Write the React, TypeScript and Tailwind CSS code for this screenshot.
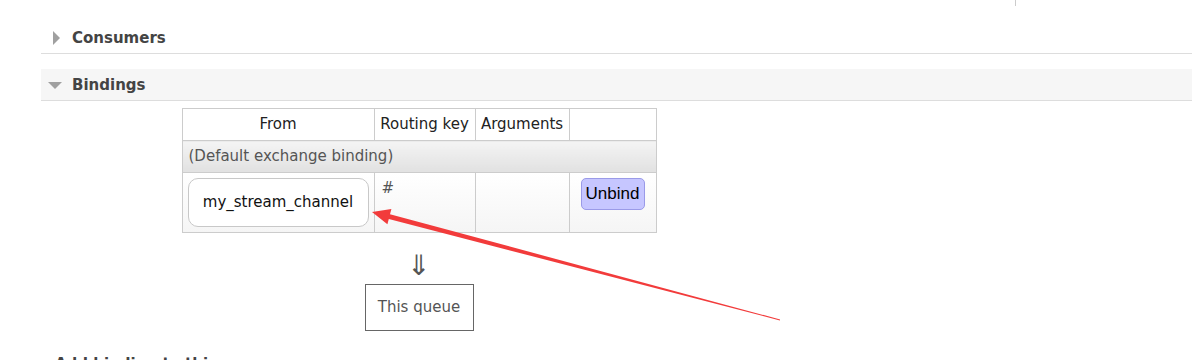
import React from "react";

const SectionHeader: React.FC<{ title: string; open?: boolean }> = ({ title, open }) => (
  <div
    className={`flex items-center h-[32px] border-b border-[#dddddd] ${
      open ? "bg-[#f6f6f6]" : ""
    }`}
  >
    <div className="w-[31px] flex justify-center">
      {open ? (
        <div className="w-0 h-0 border-l-[7px] border-r-[7px] border-t-[7px] border-l-transparent border-r-transparent border-t-[#a0a0a0] ml-[-3px] mt-[1px]" />
      ) : (
        <div className="w-0 h-0 border-t-[7px] border-b-[7px] border-l-[7px] border-t-transparent border-b-transparent border-l-[#a0a0a0] ml-[-1px]" />
      )}
    </div>
    <h2 className="text-[15px] font-bold text-[#444444] leading-none mt-[1px]">{title}</h2>
  </div>
);

const RedArrow = () => (
  <svg
    className="absolute inset-0 pointer-events-none"
    width={1192}
    height={360}
    viewBox="0 0 1192 360"
  >
    <polygon
      fill="#f23b3b"
      points="372,212 391.4,208.9 390,214.2 780.1,319.5 779.9,320.5 388.8,219 387.4,224.3"
    />
  </svg>
);

export default function App() {
  return (
    <div className="relative w-[1192px] h-[360px] overflow-hidden bg-white font-['DejaVu_Sans',sans-serif]">
      <div className="h-[6px] ml-[1015px] w-px bg-[#cccccc]" />
      <div className="pl-[41px] pt-[16px]">
        <SectionHeader title="Consumers" />
        <div className="mt-[15px]">
          <SectionHeader title="Bindings" open />
        </div>

        <div className="ml-[141px] mt-[7px] w-[474px] flex flex-col items-center">
          <table className="w-[474px] table-fixed border-collapse text-[15px] text-[#222222]">
            <colgroup>
              <col className="w-[192px]" />
              <col className="w-[101px]" />
              <col className="w-[94px]" />
              <col className="w-[87px]" />
            </colgroup>
            <thead>
              <tr>
                <th className="h-[32px] border border-[#cccccc] font-normal text-center whitespace-nowrap">From</th>
                <th className="border border-[#cccccc] font-normal text-center whitespace-nowrap">Routing key</th>
                <th className="border border-[#cccccc] font-normal text-center whitespace-nowrap">Arguments</th>
                <th className="border border-[#cccccc]" />
              </tr>
            </thead>
            <tbody>
              <tr>
                <td
                  colSpan={4}
                  className="h-[32px] border border-[#cccccc] px-[6px] text-[#555555] bg-gradient-to-b from-[#f4f4f4] to-[#e1e1e1]"
                >
                  (Default exchange binding)
                </td>
              </tr>
              <tr className="bg-gradient-to-b from-white to-[#f5f5f5]">
                <td className="h-[60px] border border-[#cccccc] p-[5px] align-top">
                  <div className="h-[49px] rounded-[10px] border border-[#c8c8c8] bg-white flex items-center justify-center text-[#111111] text-[15px]">
                    my_stream_channel
                  </div>
                </td>
                <td className="border border-[#cccccc] px-[7px] pt-[4px] align-top text-[#555555]">#</td>
                <td className="border border-[#cccccc]" />
                <td className="border border-[#cccccc] pt-[5px] align-top">
                  <div className="flex justify-center">
                    <button className="w-[64px] h-[32px] rounded-[5px] border border-[#9a9ae8] bg-[#c6c6ff] text-[17px] text-black font-['Liberation_Sans',sans-serif]">
                      Unbind
                    </button>
                  </div>
                </td>
              </tr>
            </tbody>
          </table>

          <div className="mt-[19px] text-[28px] leading-[28px] text-[#555555] font-['DejaVu_Sans',sans-serif]">⇓</div>
          <div className="mt-[4px] w-[109px] h-[47px] border border-[#666666] flex items-center justify-center text-[15px] text-[#555555]">
            This queue
          </div>
        </div>

        <h3 className="mt-[23px] ml-[14px] text-[15px] font-bold text-[#444444] leading-[20px]">
          Add binding to this queue
        </h3>
      </div>
      <RedArrow />
    </div>
  );
}
